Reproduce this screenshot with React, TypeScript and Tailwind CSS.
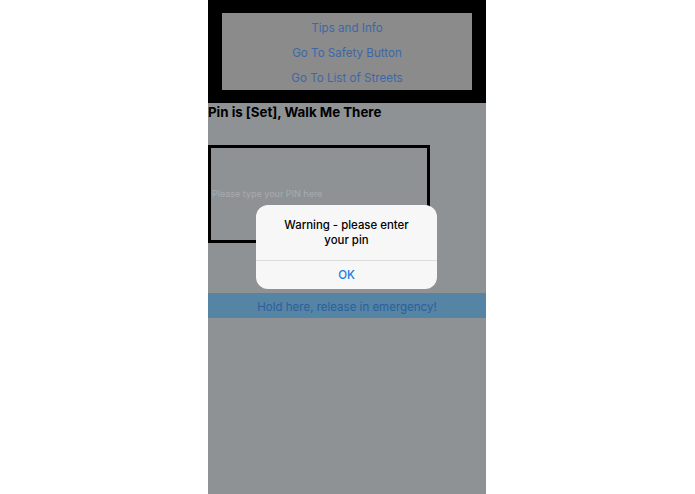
export default function App() {
  return (
    <main className="w-[695px] h-[494px] bg-white flex pl-[208px]" style={{ fontFamily: 'Inter, "Noto Sans", sans-serif' }}>
      <div className="relative w-[278px] h-full bg-[#8e9295] flex flex-col">
        {/* nav */}
        <div className="bg-black h-[103px] pt-[13px] px-[14px]">
          <div className="bg-[#8b8b8b] h-[77px] pt-[2px] flex flex-col items-center justify-center gap-[9px] text-[11.6px] leading-[16px] text-[#3b68a6]">
            <span>Tips and Info</span>
            <span>Go To Safety Button</span>
            <span>Go To List of Streets</span>
          </div>
        </div>

        <h1 className="text-[13.3px] font-bold text-black leading-none mt-[3px]">Pin is [Set], Walk Me There</h1>

        <div className="mt-[26px] w-[222px] h-[98px] border-[3px] border-black flex items-center">
          <span className="text-[9px] text-[#a9abad] pl-[1px] -mt-[2px]">Please type your PIN here</span>
        </div>

        <div className="mt-[50px] h-[25px] pt-[3px] bg-[#5584a4] flex items-center justify-center text-[11.5px] text-[#2c5f9c]">
          Hold here, release in emergency!
        </div>

        {/* alert */}
        <div className="absolute left-[48px] top-[205px] w-[181px] h-[84px] bg-[#f7f7f7] rounded-[12px] flex flex-col overflow-hidden">
          <div className="flex-1 flex items-center justify-center text-center text-[11.4px] font-medium text-black leading-[15px] px-4 pt-[1px]">
            Warning - please enter<br />your pin
          </div>
          <div className="h-[29px] pt-[2px] border-t border-[#dcdcdc] flex items-center justify-center text-[11.5px] font-medium text-[#1a7ae0]">
            OK
          </div>
        </div>
      </div>
    </main>
  );
}
